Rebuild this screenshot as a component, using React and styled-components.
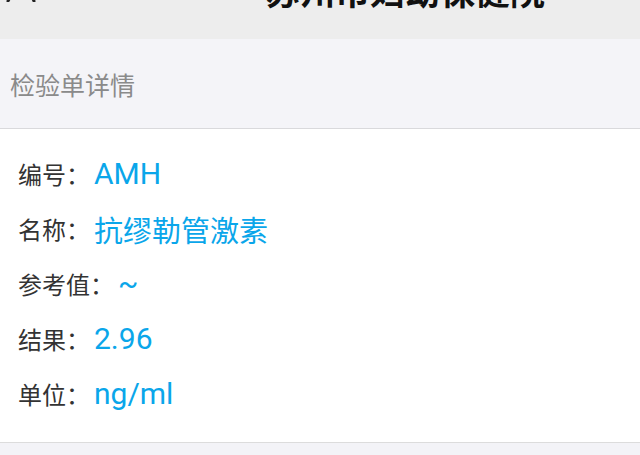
import React from "react";
import styled, { createGlobalStyle } from "styled-components";

const Global = createGlobalStyle`
  html, body { margin: 0; padding: 0; background: #f3f3f7; }
  body { font-family: "Noto Sans CJK SC", "Noto Sans", sans-serif; }
`;

const Page = styled.div`
  width: 640px;
  height: 455px;
  overflow: hidden;
  background: #f3f3f7;
  display: flex;
  flex-direction: column;
`;

const NavBar = styled.div`
  height: 39px;
  flex: none;
  background: #ededed;
  display: flex;
  align-items: flex-start;
  overflow: hidden;
`;

const BackIcon = styled.svg`
  flex: none;
  width: 44px;
  height: 30px;
  margin-top: -28px;
`;

const Title = styled.div`
  margin-top: -28px;
  margin-left: 221px;
  font-size: 35px;
  line-height: 35px;
  font-weight: 700;
  color: #111;
  white-space: nowrap;
`;

const SectionHeader = styled.div`
  height: 89px;
  flex: none;
  background: #f4f4f8;
  border-bottom: 1px solid #d9d9dc;
  display: flex;
  align-items: center;
  padding-left: 10px;
  font-size: 25px;
  color: #8a8a8a;
`;

const Panel = styled.div`
  background: #fff;
  border-bottom: 1px solid #dcdcdc;
  padding: 17px 0 21px 18px;
  display: flex;
  flex-direction: column;
`;

const Row = styled.div`
  height: 55px;
  display: flex;
  align-items: center;
`;

const Label = styled.span`
  font-size: 24px;
  color: #333;
`;

const Value = styled.span`
  font-size: ${(p) => (p.$latin ? "30px" : "29px")};
  font-family: ${(p) =>
    p.$latin ? 'Roboto, "Noto Sans CJK SC", sans-serif' : '"Noto Sans CJK SC", sans-serif'};
  color: #0aa6ea;
  margin-left: 4px;
`;

const rows = [
  { label: "编号：", value: "AMH", latin: true },
  { label: "名称：", value: "抗缪勒管激素" },
  { label: "参考值：", value: "~", latin: true },
  { label: "结果：", value: "2.96", latin: true },
  { label: "单位：", value: "ng/ml", latin: true },
];

export default function App() {
  return (
    <Page>
      <Global />
      <NavBar>
        <BackIcon viewBox="0 0 44 30">
          <path d="M20 8 L8 29" stroke="#222" strokeWidth="3" fill="none" strokeLinecap="round" />
          <path d="M24 8 L34 29" stroke="#222" strokeWidth="3" fill="none" strokeLinecap="round" />
        </BackIcon>
        <Title>苏州市妇幼保健院</Title>
      </NavBar>
      <SectionHeader>检验单详情</SectionHeader>
      <Panel>
        {rows.map((r) => (
          <Row key={r.label}>
            <Label>{r.label}</Label>
            <Value $latin={r.latin}>{r.value}</Value>
          </Row>
        ))}
      </Panel>
    </Page>
  );
}
